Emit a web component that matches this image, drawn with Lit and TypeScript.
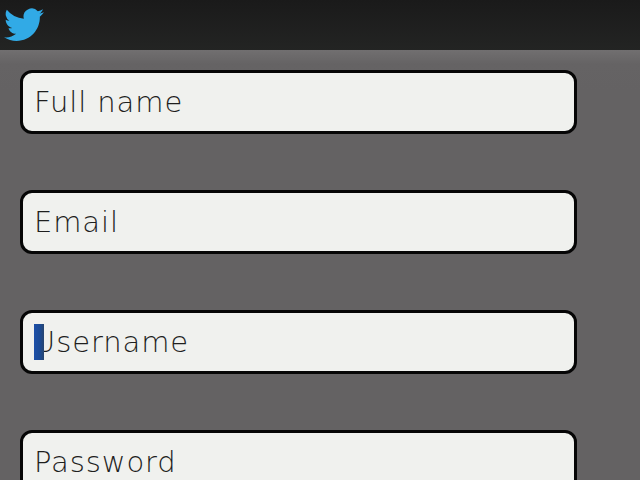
import { LitElement, html, css } from "lit";
import { customElement } from "lit/decorators.js";

@customElement("app-root")
export class AppRoot extends LitElement {
  static styles = css`
    :host {
      display: block;
      width: 640px;
      height: 480px;
      overflow: hidden;
      background: #646263;
      font-family: "DejaVu Sans", sans-serif;
    }
    .bar {
      height: 50px;
      box-sizing: border-box;
      background: linear-gradient(#1a1a1a, #232423);
      padding: 8px 0 0 4px;
    }
    .bar svg { display: block; width: 40px; height: 34px; }
    .form {
      display: flex;
      flex-direction: column;
      gap: 56px;
      padding: 19.5px 0 0 19.5px;
      background: linear-gradient(#716f70, #656364 14px, #646263 40px);
    }
    .field {
      position: relative;
      box-sizing: border-box;
      width: 557px;
      height: 64px;
      flex: none;
      border: 3px solid #060606;
      border-radius: 12px;
      background: #f0f1ee;
      display: flex;
      align-items: center;
      padding: 0 0 0 11.5px;
      font-size: 29px;
      font-weight: 200;
      letter-spacing: 0.9px;
      color: #1f1f1e;
    }
    .caret {
      position: absolute;
      left: 11.5px;
      top: 11px;
      width: 10px;
      height: 36px;
      background: linear-gradient(90deg, #1c4fa8, #1b4a94 60%, #27456f);
    }
  `;

  render() {
    return html`
      <div class="bar">
        <svg viewBox="0 0 24 20" aria-hidden="true">
          <path fill="#31aae6" d="M24 2.400c-.9.4-1.800.6-2.800.8 1-.6 1.800-1.600 2.200-2.700-1 .6-2 1-3.100 1.200A4.900 4.900 0 0 0 11.900 6.200 14 14 0 0 1 1.700.9a4.900 4.900 0 0 0 1.500 6.600c-.8 0-1.600-.2-2.200-.6 0 2.400 1.700 4.400 3.900 4.900-.7.200-1.500.2-2.200.1.600 2 2.400 3.400 4.600 3.400A9.900 9.900 0 0 1 0 17.400 14 14 0 0 0 7.500 19.600c9.100 0 14.300-7.700 14-14.600 1-.7 1.800-1.600 2.500-2.600z"/>
        </svg>
      </div>
      <div class="form">
        <div class="field">Full name</div>
        <div class="field">Email</div>
        <div class="field"><span class="caret"></span>Username</div>
        <div class="field">Password</div>
      </div>
    `;
  }
}
